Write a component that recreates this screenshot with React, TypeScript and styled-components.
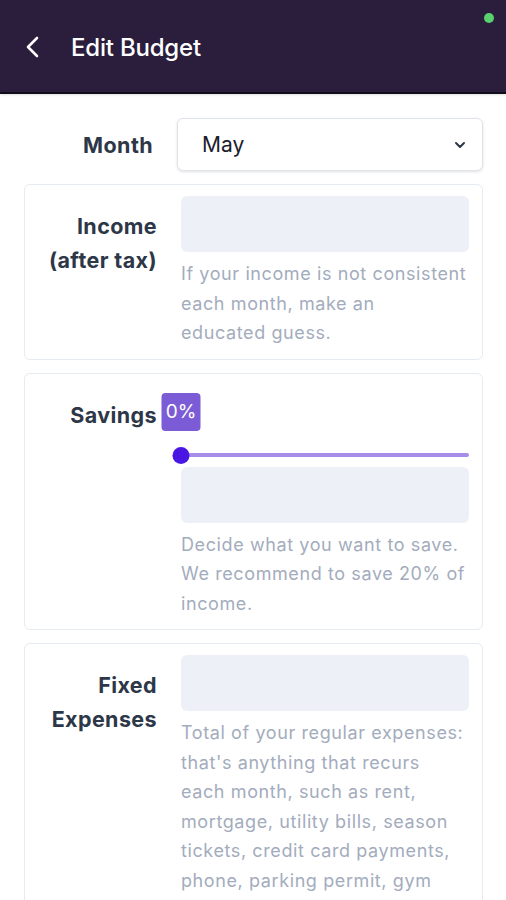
import React, { useState } from 'react';
import styled, { createGlobalStyle } from 'styled-components';

const GlobalStyle = createGlobalStyle`
  html, body {
    margin: 0;
    padding: 0;
    background: #ffffff;
    font-family: Inter, "Noto Sans", "Liberation Sans", sans-serif;
  }
  * { box-sizing: border-box; }
`;

const Header = styled.header`
  height: 94px;
  background-color: #2a1e3c;
  border-bottom: 2px solid #120c1c;
  box-shadow: 0 1px 2px rgba(0, 0, 0, 0.12);
  display: flex;
  align-items: center;
  padding: 2px 0 0 22px;
  position: relative;
`;

const BackButton = styled.button`
  background: none;
  border: 0;
  padding: 0;
  width: 20px;
  height: 26px;
  display: flex;
  align-items: center;
  justify-content: center;
  cursor: pointer;
  margin-right: 29px;
`;

const Title = styled.h1`
  margin: 0;
  color: #ffffff;
  font-size: 24px;
  font-weight: 500;
  letter-spacing: -0.2px;
`;

const StatusDot = styled.span`
  position: absolute;
  top: 13px;
  right: 12px;
  width: 10px;
  height: 10px;
  border-radius: 50%;
  background: #5ad06e;
`;

const Content = styled.main`
  padding: 24px 23px 0 24px;
  display: flex;
  flex-direction: column;
  gap: 13px;
`;

const Row = styled.div`
  display: grid;
  grid-template-columns: 1fr 2fr;
  align-items: start;
`;

const Card = styled(Row)`
  border: 1px solid #e6ebf1;
  border-radius: 6px;
  padding: 11px 13px 11px 12px;
`;

const Label = styled.label<{ $center?: boolean }>`
  text-align: right;
  padding-right: 24px;
  padding-top: ${(p) => (p.$center ? '0' : '13px')};
  align-self: ${(p) => (p.$center ? 'center' : 'start')};
  font-size: 21.5px;
  line-height: 34px;
  font-weight: 700;
  letter-spacing: 0.4px;
  color: #2d3748;
  white-space: nowrap;
`;

const Field = styled.div`
  display: flex;
  flex-direction: column;
`;

const SelectBox = styled.div`
  height: 53px;
  border: 1px solid #dfe3ea;
  border-radius: 6px;
  box-shadow: 0 1px 3px rgba(0, 0, 0, 0.12);
  display: flex;
  align-items: center;
  justify-content: space-between;
  padding: 0 16px 0 24px;
  font-size: 21px;
  color: #1a202c;
  background: #ffffff;
`;

const Input = styled.div`
  height: 56px;
  border-radius: 6px;
  background: #edf1f7;
`;

const Help = styled.p`
  margin: 7px 0 0;
  font-size: 18px;
  line-height: 29.5px;
  letter-spacing: 0.6px;
  color: #a3acbd;
`;

const SliderWrap = styled.div`
  position: relative;
  height: 82px;
`;

const Track = styled.div`
  position: absolute;
  left: 0;
  right: 0;
  top: 68px;
  height: 4px;
  border-radius: 2px;
  background: #a88cea;
`;

const Thumb = styled.div`
  position: absolute;
  top: 62px;
  width: 17px;
  height: 17px;
  border-radius: 50%;
  background: #4a16e4;
  transform: translateX(-50%);
`;

const ValueBadge = styled.div`
  position: absolute;
  top: 8px;
  width: 39px;
  height: 38px;
  border-radius: 4px;
  background: #7c5cd6;
  color: #ffffff;
  font-size: 19px;
  font-weight: 400;
  display: flex;
  align-items: center;
  justify-content: center;
  transform: translateX(-50%);
`;

const App: React.FunctionComponent = () => {
  const [savings] = useState(0);

  return (
    <>
      <GlobalStyle />
      <Header>
        <BackButton aria-label="Back">
          <svg width="14" height="22" viewBox="0 0 14 22" fill="none">
            <path d="M12 2 L3 11 L12 20" stroke="#ffffff" strokeWidth="2.6" strokeLinecap="round" strokeLinejoin="round" />
          </svg>
        </BackButton>
        <Title>Edit Budget</Title>
        <StatusDot />
      </Header>
      <Content>
        <Row>
          <Label $center>Month</Label>
          <SelectBox>
            <span>May</span>
            <svg width="12" height="8" viewBox="0 0 12 8" fill="none">
              <path d="M2 2 L6 6 L10 2" stroke="#2d3748" strokeWidth="2" strokeLinecap="round" strokeLinejoin="round" />
            </svg>
          </SelectBox>
        </Row>

        <Card>
          <Label>Income<br />(after tax)</Label>
          <Field>
            <Input />
            <Help>If your income is not consistent each month, make an<br />educated guess.</Help>
          </Field>
        </Card>

        <Card>
          <Label>Savings</Label>
          <Field>
            <SliderWrap>
              <Track />
              <ValueBadge style={{ left: `${savings}%` }}>{savings}%</ValueBadge>
              <Thumb style={{ left: `${savings}%` }} />
            </SliderWrap>
            <Input />
            <Help>Decide what you want to save. We recommend to save 20% of income.</Help>
          </Field>
        </Card>

        <Card>
          <Label>Fixed<br />Expenses</Label>
          <Field>
            <Input />
            <Help>
              Total of your regular expenses: that's anything that recurs each month, such as rent,
              mortgage, utility bills, season tickets, credit card payments, phone, parking permit, gym
              membership and so on.
            </Help>
          </Field>
        </Card>
      </Content>
    </>
  );
};

export default App;
